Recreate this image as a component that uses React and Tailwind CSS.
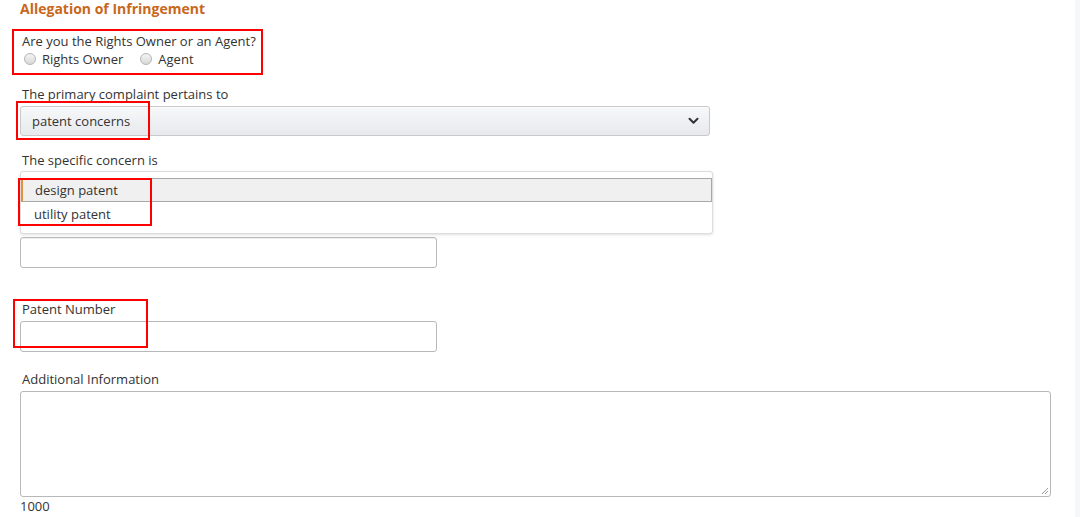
const Radio = ({ label }) => (
  <label className="flex items-center gap-[6px]">
    <span className="w-[12px] h-[12px] rounded-full border border-[#b5b5b5] bg-gradient-to-b from-[#f4f4f4] to-[#d9d9d9]"></span>
    <span>{label}</span>
  </label>
);

const Mark = ({ className }) => (
  <div className={"absolute border-2 border-[#ff0000] pointer-events-none " + className}></div>
);

const App = () => {
  return (
    <div
      className="relative w-[1080px] h-[517px] overflow-hidden bg-white text-[#333] text-[13px] leading-[16px]"
      style={{ fontFamily: '"Open Sans", "Noto Sans", sans-serif' }}
    >
      <div className="absolute right-0 top-0 h-full w-[5px] bg-[#f6f7f8]"></div>

      <div className="pl-[20px] pt-[1px]">
        <h2 className="text-[14px] font-bold text-[#c8681c] leading-[16px]">Allegation of Infringement</h2>

        <div className="mt-[16px] pl-[2px]">Are you the Rights Owner or an Agent?</div>
        <div className="mt-[2px] flex items-center gap-[17px] pl-[4px]">
          <Radio label="Rights Owner" />
          <Radio label="Agent" />
        </div>

        <div className="mt-[19px] pl-[2px]">The primary complaint pertains to</div>
        <div className="mt-[4px] w-[690px] h-[30px] rounded-[3px] border border-[#c9c9c9] bg-gradient-to-b from-[#f7f8fa] to-[#e7e9ec] shadow-[0_1px_0_rgba(255,255,255,0.6)_inset] flex items-center justify-between pl-[11px] pr-[10px]">
          <span>patent concerns</span>
          <svg width="11" height="8" viewBox="0 0 11 8" fill="none">
            <path d="M1.5 1.8 L5.5 5.8 L9.5 1.8" stroke="#333" strokeWidth="2" strokeLinecap="round" strokeLinejoin="round" />
          </svg>
        </div>

        <div className="mt-[16px] pl-[2px]">The specific concern is</div>
        <div className="mt-[3px] w-[693px] h-[63px] rounded-[3px] border border-[#dcdcdc] bg-white shadow-[0_1px_3px_rgba(0,0,0,0.12)] pt-[6px]">
          <div className="h-[24px] flex items-center bg-[#f0f0f0] border border-[#a8a8a8] border-l-[2px] border-l-[#e4913e] pl-[12px]">
            design patent
          </div>
          <div className="h-[24px] flex items-center pl-[13px]">utility patent</div>
        </div>

        <div className="mt-[3px] w-[417px] h-[31px] rounded-[3px] border border-[#b8b8b8] bg-white shadow-[0_1px_0_rgba(0,0,0,0.06)_inset]"></div>

        <div className="mt-[33px] pl-[2px]">Patent Number</div>
        <div className="mt-[4px] w-[417px] h-[31px] rounded-[3px] border border-[#b8b8b8] bg-white"></div>

        <div className="mt-[19px] pl-[2px]">Additional Information</div>
        <div className="relative mt-[4px] w-[1031px] h-[106px] rounded-[3px] border border-[#b8b8b8] bg-white">
          <svg className="absolute right-[1px] bottom-[1px]" width="8" height="8" viewBox="0 0 8 8">
            <path d="M7 1 L1 7 M7 4 L4 7" stroke="#9a9a9a" strokeWidth="1" />
          </svg>
        </div>
        <div className="mt-[1px]">1000</div>
      </div>

      <Mark className="left-[12px] top-[29px] w-[251px] h-[46px]" />
      <Mark className="left-[16px] top-[101px] w-[134px] h-[39px]" />
      <Mark className="left-[18px] top-[178px] w-[134px] h-[48px]" />
      <Mark className="left-[13px] top-[299px] w-[135px] h-[49px]" />
    </div>
  );
};

export default App;
